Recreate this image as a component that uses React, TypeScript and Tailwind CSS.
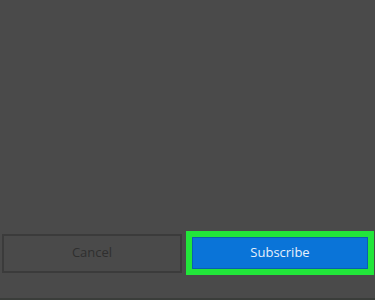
export default function App() {
  return (
    <div className="flex h-[300px] w-[375px] flex-col bg-[#4a4a4a] font-['Open_Sans',sans-serif]">
      <div className="flex-1" />
      <div className="flex h-[44px] items-center gap-[4px] pl-[2px] pr-[1px]">
        <button className="h-[39px] w-[180px] border-2 border-[#3b3b3b] text-[13px] text-[#2f2f2f]">
          Cancel
        </button>
        <div className="flex h-[44px] flex-1 border-[6px] border-[#22e63a] bg-[#0a74d8]">
          <button className="flex-1 border border-[#0a5fb0] text-[13px] text-[#e6f0fb]">
            Subscribe
          </button>
        </div>
      </div>
      <div className="h-[23px]" />
      <div className="h-[2px] bg-[#3a3d3a]" />
    </div>
  );
}
